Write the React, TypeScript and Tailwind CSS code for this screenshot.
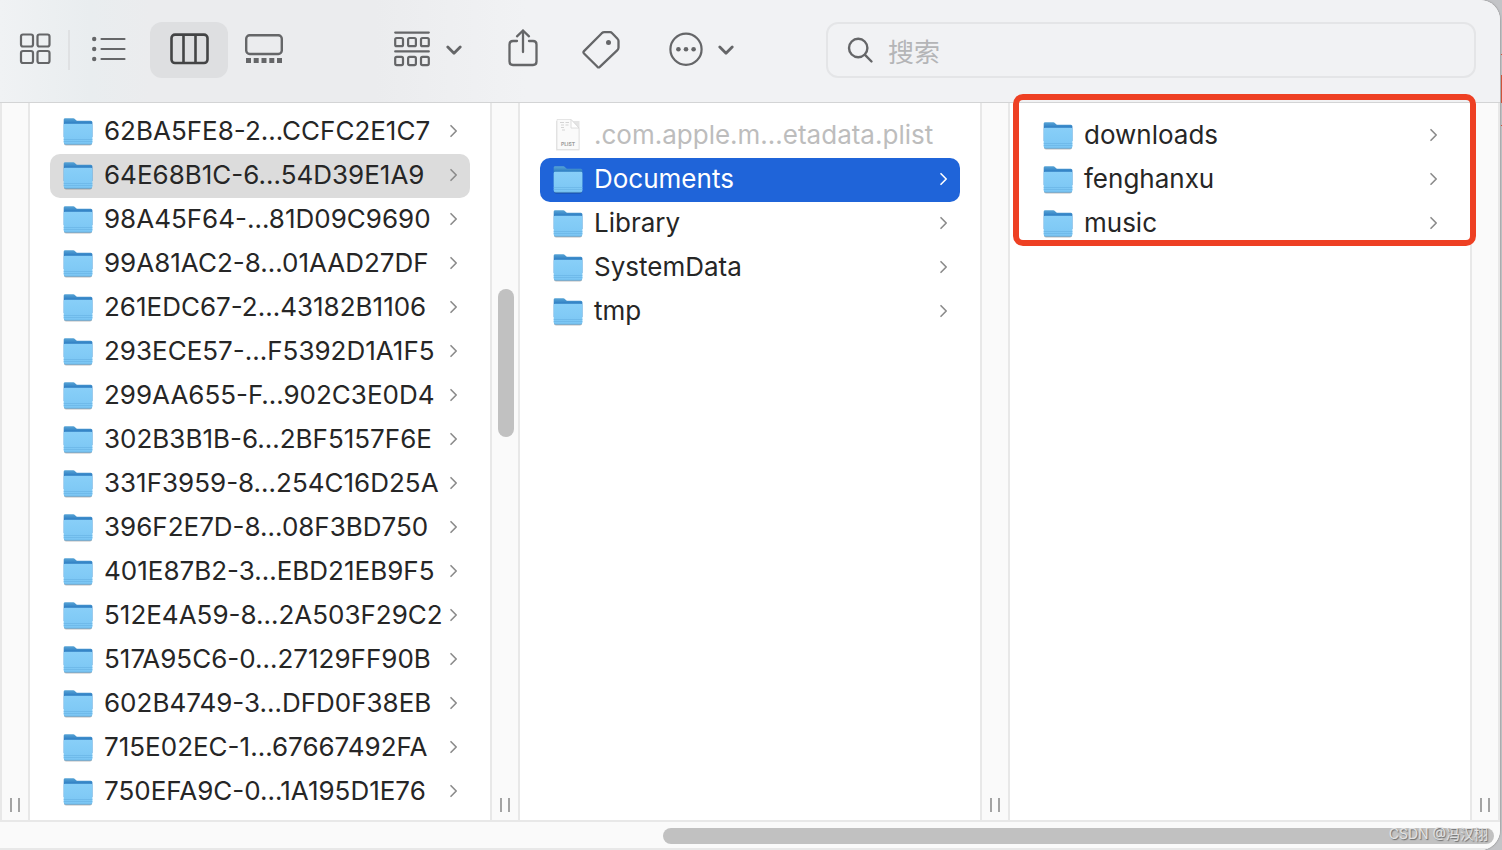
import type { ReactNode } from "react";

type Item = { name: string; kind?: "file"; state?: "active" | "path" };

const CONTAINERS: Item[] = [
  { name: "62BA5FE8-2…CCFC2E1C7" },
  { name: "64E68B1C-6…54D39E1A9", state: "path" },
  { name: "98A45F64-…81D09C9690" },
  { name: "99A81AC2-8…01AAD27DF" },
  { name: "261EDC67-2…43182B1106" },
  { name: "293ECE57-…F5392D1A1F5" },
  { name: "299AA655-F…902C3E0D4" },
  { name: "302B3B1B-6…2BF5157F6E" },
  { name: "331F3959-8…254C16D25A" },
  { name: "396F2E7D-8…08F3BD750" },
  { name: "401E87B2-3…EBD21EB9F5" },
  { name: "512E4A59-8…2A503F29C2" },
  { name: "517A95C6-0…27129FF90B" },
  { name: "602B4749-3…DFD0F38EB" },
  { name: "715E02EC-1…67667492FA" },
  { name: "750EFA9C-0…1A195D1E76" },
];

const SANDBOX: Item[] = [
  { name: ".com.apple.m…etadata.plist", kind: "file" },
  { name: "Documents", state: "active" },
  { name: "Library" },
  { name: "SystemData" },
  { name: "tmp" },
];

const DOCUMENTS: Item[] = [{ name: "downloads" }, { name: "fenghanxu" }, { name: "music" }];

function FolderIcon() {
  return (
    <svg width="32" height="32" viewBox="0 -2 32 32" className="shrink-0" aria-hidden="true">
      <defs>
        <linearGradient id="folder-back" x1="0" y1="0" x2="0" y2="1">
          <stop offset="0" stopColor="#58a5d6" />
          <stop offset="0.3" stopColor="#2b7bc2" />
          <stop offset="1" stopColor="#2b7bc2" />
        </linearGradient>
        <linearGradient id="folder-front" x1="0" y1="0" x2="0" y2="1">
          <stop offset="0" stopColor="#88cff8" />
          <stop offset="1" stopColor="#7bc6f4" />
        </linearGradient>
      </defs>
      <rect x="2" y="10" width="28" height="18.6" rx="2" fill="#000" opacity="0.25" />
      <path
        d="M1.7 2.6q0-1.4 1.5-1.4h7.6c1 0 1.600.3 2.300 1l.8.7c.7.6 1.200.8 2.100.8h12.800q1.600 0 1.600 1.600V20H1.700z"
        fill="url(#folder-back)"
      />
      <path
        d="M1.7 8.2q0-1.4 1.4-1.4H29q1.4 0 1.4 1.4v17.2q0 1.9-1.9 1.9H3.6q-1.9 0-1.9-1.9z"
        fill="url(#folder-front)"
      />
      <path d="M1.7 22.5h28.7M1.7 24.5h28.7" stroke="#69b5e5" strokeWidth="0.7" />
      <path d="M2.3 26.8q.6.5 1.4.5h24.7q.8 0 1.4-.5" stroke="#5a9fcd" strokeWidth="0.7" fill="none" />
    </svg>
  );
}

function PlistIcon() {
  return (
    <svg width="32" height="36" viewBox="0 0 32 36" className="shrink-0" aria-hidden="true">
      <path d="M4 4h23.5v29.5H4z" fill="#000" opacity="0.1" />
      <path d="M5 2.5h14l8 8.5v21.5H5z" fill="#fafafa" stroke="#dedede" strokeWidth="0.8" />
      <path d="M19 2.5V11h8z" fill="#fff" stroke="#d6d6d6" strokeWidth="0.8" />
      <path d="M8 5.5h4M13.5 5.5H17M9 8h3M13.5 8h3M9 10.5h3M10 13h3" stroke="#d4d4d4" />
      <text x="16" y="29" textAnchor="middle" fontSize="5" fontWeight="700" fill="#9c9c9c" fontFamily="Inter, sans-serif">
        PLIST
      </text>
    </svg>
  );
}

function RowArrow() {
  return (
    <svg width="8" height="14" viewBox="0 0 8 14" fill="none" className="shrink-0" aria-hidden="true">
      <path d="M1 1.7 6.2 7 1 12.3" stroke="currentColor" strokeWidth="1.6" strokeLinecap="round" strokeLinejoin="round" />
    </svg>
  );
}

function DownArrow() {
  return (
    <svg width="16" height="16" viewBox="0 0 16 16" fill="none" aria-hidden="true">
      <path d="M1.8 5 8 11.2 14.2 5" stroke="currentColor" strokeWidth="2.8" strokeLinecap="round" strokeLinejoin="round" />
    </svg>
  );
}

function Row({ item }: { item: Item }) {
  const tone =
    item.state === "active"
      ? "bg-[#1f64d9] text-white"
      : item.state === "path"
        ? "bg-[#dcdcdc] text-[#262626]"
        : item.kind === "file"
          ? "text-[#bdbdbd]"
          : "text-[#262626]";

  return (
    <li>
      <button type="button" className={`flex h-11 w-full items-center rounded-[10px] px-3 pb-0.5 text-left ${tone}`}>
        {item.kind === "file" ? <PlistIcon /> : <FolderIcon />}
        <span className="ml-[10px] min-w-0 flex-1 whitespace-nowrap text-[26px] leading-8">{item.name}</span>
        {item.kind !== "file" && (
          <span className={item.state === "active" ? "text-white" : "text-[#8a8a8a]"}>
            <RowArrow />
          </span>
        )}
      </button>
    </li>
  );
}

function Gutter({ children }: { children?: ReactNode }) {
  return (
    <div className="flex w-[30px] shrink-0 flex-col items-center justify-end border-x-2 border-[#e8e8e8] bg-[#fafafa] pb-2">
      {children}
      <div className="flex h-[14px] w-[10px] justify-between border-x-2 border-[#a3a3a3]" />
    </div>
  );
}

function Column({ label, items, className }: { label: string; items: Item[]; className: string }) {
  return (
    <ul aria-label={label} className={`px-5 ${className}`}>
      {items.map((item) => (
        <Row key={item.name} item={item} />
      ))}
    </ul>
  );
}

function ToolButton({ label, className, children }: { label: string; className: string; children: ReactNode }) {
  return (
    <button
      type="button"
      aria-label={label}
      className={`flex h-14 shrink-0 items-center justify-center rounded-xl ${className}`}
    >
      {children}
    </button>
  );
}

function Toolbar() {
  return (
    <header className="flex border-b border-[#d3d4d5] bg-[linear-gradient(to_right,#f0f2f4,#e9edef_6%,#ebecee_10%,#ebecee_25%,#f1f2f4_35%)] pt-[22px] pr-6 pb-6 text-[#656668]">
      <ToolButton label="Icons" className="w-[68px] pl-0.5">
        <svg width="36" height="36" viewBox="0 0 36 36" fill="none" stroke="currentColor" strokeWidth="2.2" aria-hidden="true">
          <rect x="4" y="2.5" width="12" height="12" rx="2" />
          <rect x="20.5" y="2.5" width="12" height="12" rx="2" />
          <rect x="4" y="19" width="12" height="12" rx="2" />
          <rect x="20.5" y="19" width="12" height="12" rx="2" />
        </svg>
      </ToolButton>
      <div className="h-10 w-0.5 shrink-0 self-center bg-[#dfe1e3]" />
      <ToolButton label="List" className="w-[78px]">
        <svg width="36" height="36" viewBox="0 0 36 36" fill="none" stroke="currentColor" strokeWidth="2.2" strokeLinecap="round" aria-hidden="true">
          <path d="M10.5 7h23M10.5 17h23M10.5 27h23" />
          <g fill="currentColor" stroke="none">
            <circle cx="3.2" cy="7" r="2.2" />
            <circle cx="3.2" cy="17" r="2.2" />
            <circle cx="3.2" cy="27" r="2.2" />
          </g>
        </svg>
      </ToolButton>
      <ToolButton label="Columns" className="ml-0.5 w-[78px] bg-[#dedfe1] text-[#434445]">
        <svg width="40" height="36" viewBox="0 0 40 36" fill="none" stroke="currentColor" strokeWidth="2.6" aria-hidden="true">
          <rect x="2.5" y="2.6" width="36" height="28.4" rx="3.5" />
          <path d="M14.5 3v28M26.5 3v28" />
        </svg>
      </ToolButton>
      <ToolButton label="Gallery" className="w-[72px]">
        <svg width="40" height="36" viewBox="0 0 40 36" fill="none" aria-hidden="true">
          <rect x="2.2" y="3.2" width="35.6" height="18.8" rx="3.5" stroke="currentColor" strokeWidth="2.4" />
          <path
            d="M2 26h5v5H2zM9.7 26h5v5h-5zM17.5 26h5v5h-5zM25.3 26h5v5h-5zM33 26h5v5h-5z"
            fill="currentColor"
          />
        </svg>
      </ToolButton>
      <ToolButton label="Group" className="ml-20 w-24 gap-4">
        <svg width="36" height="40" viewBox="0 0 36 40" fill="none" stroke="currentColor" strokeWidth="2.2" strokeLinecap="round" aria-hidden="true">
          <path d="M1.2 2.6h33.6M1.2 21.4h33.6" />
          <rect x="1.2" y="8" width="7.8" height="8.2" rx="1.5" />
          <rect x="14.1" y="8" width="7.8" height="8.2" rx="1.5" />
          <rect x="27" y="8" width="7.8" height="8.2" rx="1.5" />
          <rect x="1.2" y="26.9" width="7.8" height="8.2" rx="1.5" />
          <rect x="14.1" y="26.9" width="7.8" height="8.2" rx="1.5" />
          <rect x="27" y="26.9" width="7.8" height="8.2" rx="1.5" />
        </svg>
        <DownArrow />
      </ToolButton>
      <ToolButton label="Share" className="ml-6 w-[46px]">
        <svg width="32" height="44" viewBox="0 0 32 44" fill="none" stroke="currentColor" strokeWidth="2.3" strokeLinecap="round" strokeLinejoin="round" aria-hidden="true">
          <path d="M10 13H6q-3.5 0-3.5 3.5v17Q2.5 37 6 37h20q3.5 0 3.5-3.5v-17Q29.5 13 26 13h-4" />
          <path d="M16 24V2.5M10 8.3l6-5.8 6 5.8" />
        </svg>
      </ToolButton>
      <ToolButton label="Tags" className="ml-8 w-12">
        <svg width="40" height="40" viewBox="0 0 40 40" fill="none" aria-hidden="true">
          <path
            d="M19.8 3.2q1.1-1 2.6-1H28q1.3 0 2.2 1l5.3 5.6q1 1 1 2.3v6.5q0 1.5-1.1 2.5L17.8 36.8q-1.2 1.1-2.4 0L2 23.5q-1.2-1.2 0-2.4z"
            stroke="currentColor"
            strokeWidth="2.3"
            strokeLinejoin="round"
          />
          <circle cx="26.5" cy="12.5" r="2.5" fill="currentColor" />
        </svg>
      </ToolButton>
      <ToolButton label="More" className="ml-10 w-[70px] gap-[14px]">
        <svg width="36" height="36" viewBox="0 0 36 36" fill="none" aria-hidden="true">
          <circle cx="18" cy="17.3" r="15.6" stroke="currentColor" strokeWidth="2.2" />
          <circle cx="10.4" cy="17.3" r="2.3" fill="currentColor" />
          <circle cx="18" cy="17.3" r="2.3" fill="currentColor" />
          <circle cx="25.6" cy="17.3" r="2.3" fill="currentColor" />
        </svg>
        <DownArrow />
      </ToolButton>
      <label className="ml-[90px] flex h-14 min-w-0 flex-1 items-center rounded-xl border-2 border-[#e4e5e7] px-[18px]">
        <svg width="28" height="28" viewBox="0 0 28 28" fill="none" stroke="currentColor" strokeWidth="2.4" strokeLinecap="round" className="shrink-0" aria-hidden="true">
          <circle cx="12.2" cy="12" r="9.2" />
          <path d="m19 18.800 6.500 6.700" />
        </svg>
        <input
          type="search"
          aria-label="搜索"
          placeholder="搜索"
          className="ml-3.5 min-w-0 flex-1 bg-transparent pt-1.5 text-[26px] leading-8 text-[#262626] outline-none placeholder:text-[#b4b5b7]"
        />
      </label>
    </header>
  );
}

export default function App() {
  return (
    <div className="relative flex min-h-screen flex-col bg-[#c3c4c7] pr-0.5 font-[Inter,'Noto_Sans_CJK_SC',sans-serif]">
      <div className="flex flex-1 flex-col overflow-hidden rounded-r-[20px] bg-white shadow-[0_0_2px_#6b6b6b]">
        <Toolbar />
        <main className="flex flex-1">
          <Gutter />
          <section className="min-w-0 flex-1">
            <Column label="Containers" items={CONTAINERS} className="pt-[7px]" />
          </section>
          <Gutter>
            <div className="mt-[186px] mb-auto ml-0.5 h-[148px] w-4 rounded-full bg-[#c1c1c1]" />
          </Gutter>
          <section className="min-w-0 flex-1">
            <Column label="Sandbox" items={SANDBOX} className="pt-[11px]" />
          </section>
          <Gutter />
          <section className="min-w-0 flex-1">
            <div className="relative">
              <Column label="Documents" items={DOCUMENTS} className="pt-[11px]" />
              <div className="pointer-events-none absolute -top-[9px] -right-1.5 bottom-0 left-[3px] rounded-[10px] border-6 border-[#ee4023]" />
            </div>
          </section>
          <Gutter />
        </main>
        <footer className="border-y-2 border-[#e8e8e8] bg-[#fafafa] pt-1.5 pr-1.5 pb-1">
          <div className="ml-auto h-4 w-[55.6%] rounded-full bg-[#c1c1c1]" />
        </footer>
      </div>
      {/* edge of the window behind */}
      <div className="absolute top-[54px] right-0 flex h-[72px] w-px flex-col border-y border-[#cf5238]">
        <div className="mt-5 h-7 bg-[#cf5238]" />
      </div>
      <p className="absolute right-3.5 bottom-1.5 text-sm leading-5 text-[#e2e2e2] [text-shadow:1px_1px_1px_#6b6b6b]">
        CSDN @冯汉栩
      </p>
    </div>
  );
}
